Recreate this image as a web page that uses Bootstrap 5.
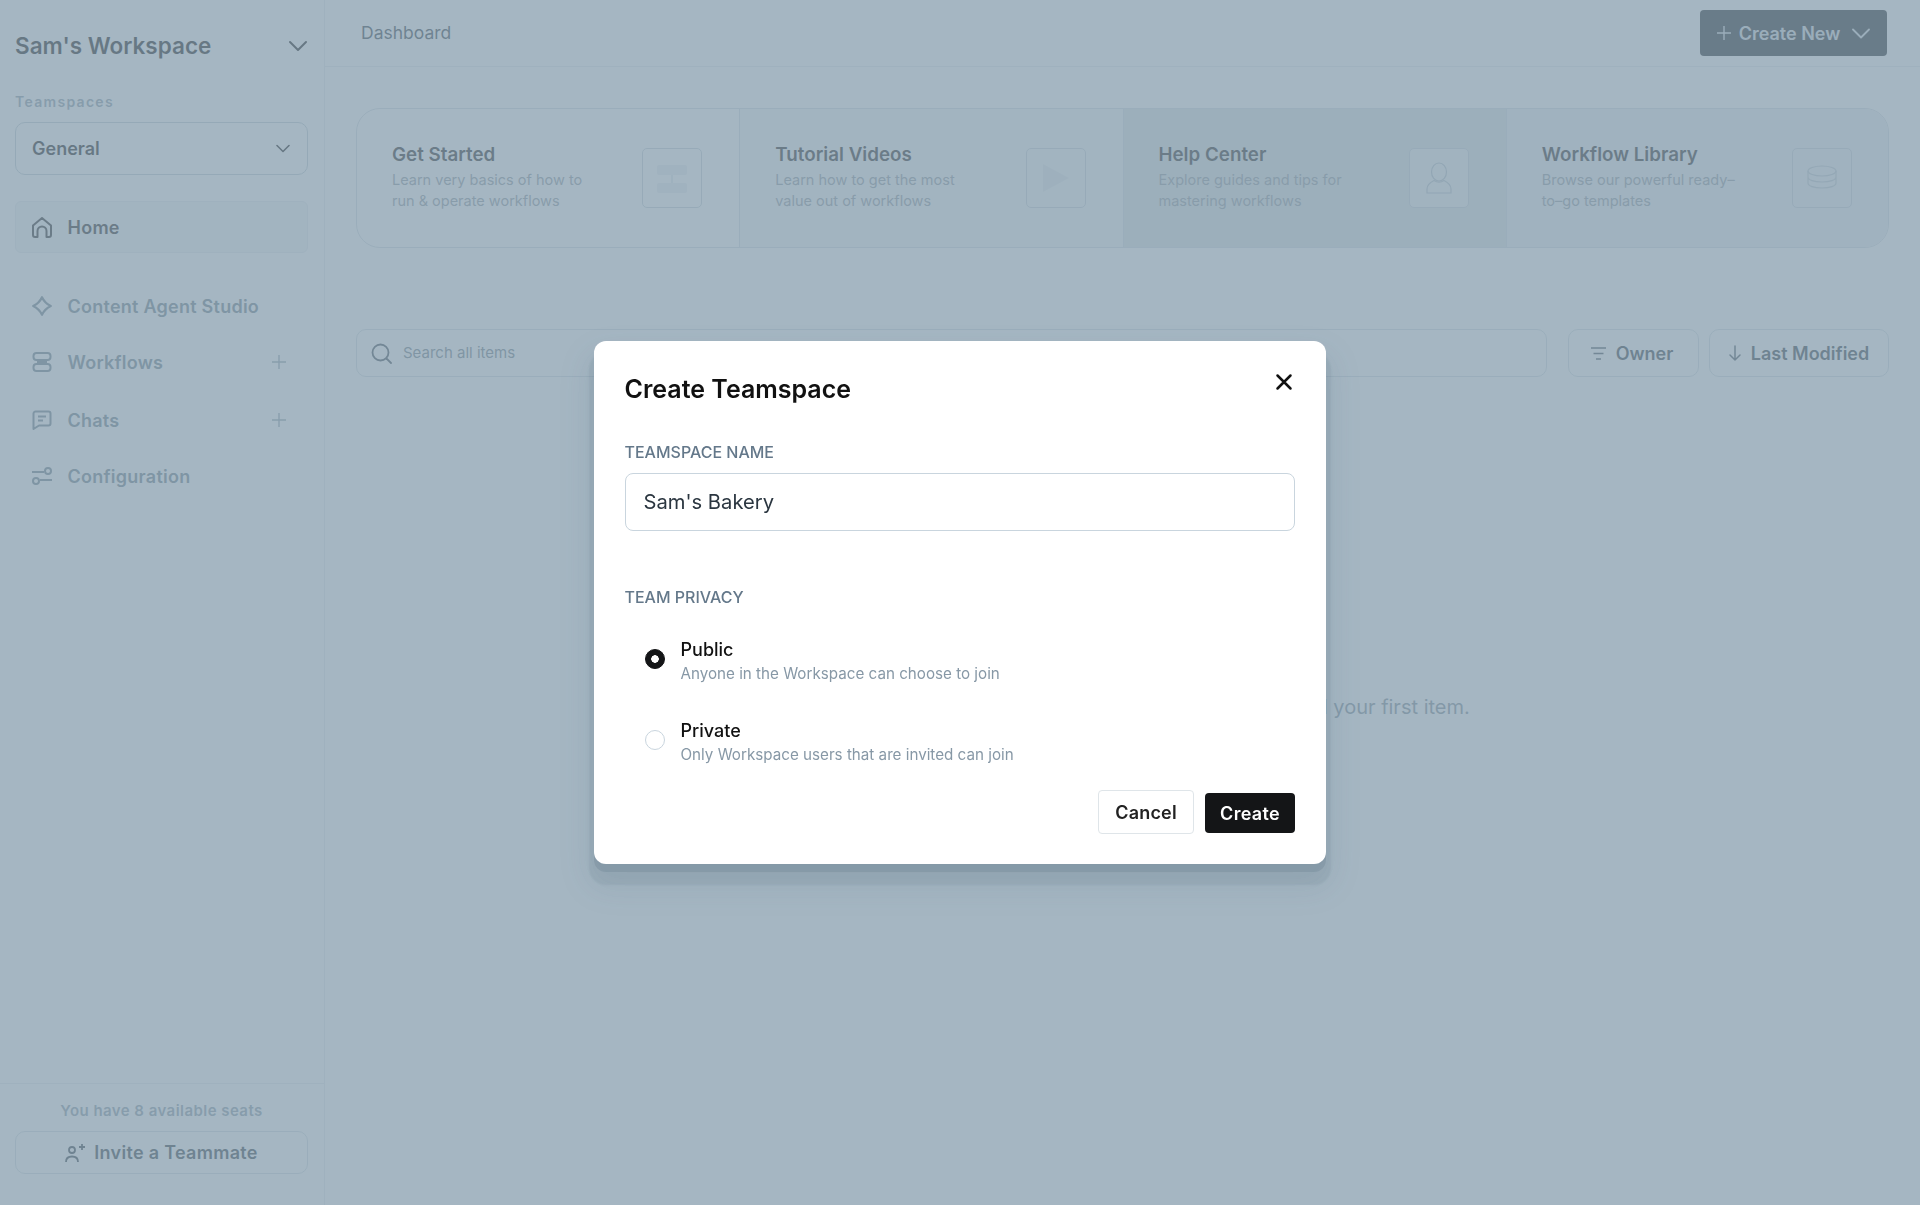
<!DOCTYPE html>
<html lang="en">
  <head>
    <meta charset="UTF-8" />
    <meta name="viewport" content="width=device-width, initial-scale=1" />
    <title>Create Teamspace</title>
    <link href="https://cdn.jsdelivr.net/npm/bootstrap@5.3.0/dist/css/bootstrap.min.css" rel="stylesheet" />
    <style>
      body {
        font-family: "Inter", "Liberation Sans", sans-serif;
        background: #fff;
        color: #111;
        height: 100vh;
        overflow: hidden;
      }
      svg { display: block; flex-shrink: 0; }

      /* sidebar */
      .side-col {
        width: 325px;
        flex-shrink: 0;
        border-right: 1px solid #e6ebee;
      }
      .side-top { padding: 0 16px 0 15px; }
      .ws-head { height: 92px; }
      .ws-title { font-size: 22.5px; font-weight: 600; }
      .team-label { font-size: 14px; font-weight: 600; letter-spacing: 1.3px; color: #8a9ca8; line-height: 20px; margin-bottom: 10px; }
      .team-select {
        height: 53px;
        border: 1px solid #c0ccd3;
        border-radius: 10px;
        padding: 0 17px 0 16px;
        font-size: 18px;
        font-weight: 600;
        margin-bottom: 26px;
      }
      .side-link {
        display: flex;
        align-items: center;
        gap: 15.5px;
        height: 54px;
        padding: 0 22px 0 17px;
        font-size: 18px;
        font-weight: 600;
        letter-spacing: .25px;
        color: #6b7f8b;
        text-decoration: none;
      }
      .side-plus { height: 58px; }
      .side-home {
        height: 52px;
        color: #222;
        background: #f3f5f6;
        border: 1px solid #e6ebee;
        border-radius: 6px;
        margin-bottom: 26px;
        padding-left: 16px;
      }
      .side-foot {
        margin-top: auto;
        border-top: 1px solid #e6ebee;
        padding: 17px 16px 31px 15px;
      }
      .seat-note { font-size: 15px; font-weight: 600; color: #8a9ca8; letter-spacing: .45px; line-height: 20px; margin-bottom: 10px; }
      .invite-btn {
        height: 43px;
        border: 1px solid #d5dde2;
        border-radius: 10px;
        font-size: 18px;
        font-weight: 600;
        letter-spacing: .3px;
        color: #2e3b44;
      }

      /* main */
      .top-strip { height: 67px; border-bottom: 1px solid #e6ebee; padding: 0 33px 0 36px; }
      .crumb { font-size: 17.5px; color: #2f3c45; }
      .create-new {
        height: 46px;
        width: 187px;
        margin-top: -1px;
        padding-top: 1px;
        background: #1a1f24;
        color: #d5dce1;
        border-radius: 4px;
        font-size: 18px;
        font-weight: 600;
      }
      .main-body { padding: 41px 31px 0 31px; }
      .tile-strip {
        height: 140px;
        border: 1px solid #d5dde2;
        border-radius: 24px;
        overflow: hidden;
      }
      .tile-item {
        flex: 1 1 0;
        padding: 0 37px 0 35px;
        border-right: 1px solid #d5dde2;
      }
      .tile-item:last-child { border-right: 0; padding-right: 36px; }
      .tile-b { background: #f4f6f6; }
      .tile-c { background: #dde3e3; }
      .tile-d { background: #eaedf1; border-color: transparent; }
      .tile-name { font-size: 18.8px; font-weight: 600; color: #222; line-height: 24px; margin-bottom: 3.5px; margin-top: -2px; }
      .tile-text { font-size: 14.5px; color: #8f9aa2; line-height: 20.5px; width: 205px; }
      .tile-icon {
        width: 60px;
        height: 60px;
        border: 1px solid #c8d2d9;
        border-radius: 5px;
        background: transparent;
        flex-shrink: 0;
      }
      .tile-c .tile-icon { background: #eef1f3; }
      .tool-row { margin-top: 81px; gap: 10px; }
      .search-field {
        height: 48px;
        width: 1191px;
        margin-right: 11px;
        border: 1px solid #d5dde2;
        border-radius: 10px;
        padding: 0 14px;
        font-size: 15px;
        color: #6f7f8a;
        gap: 11px;
      }
      .tool-btn {
        height: 48px;
        border: 1px solid #d5dde2;
        border-radius: 10px;
        font-size: 18px;
        font-weight: 600;
        color: #2e3b44;
        gap: 10px;
      }
      .tool-owner { width: 131px; padding-right: 3px; }
      .tool-sort { width: 180px; }
      .empty-note {
        font-size: 20px;
        color: #7d8d98;
        text-align: center;
        margin-top: 315px;
      }

      /* modal */
      .modal-backdrop.show {
        --bs-backdrop-bg: rgb(134, 157, 173);
        --bs-backdrop-opacity: .74;
      }
      .team-dialog { max-width: 732px; margin: 341px auto 0; }
      .team-sheet {
        height: 523px;
        border: 0;
        border-radius: 12px;
        padding: 0 31px 0 30.5px;
        box-shadow: 0 8px 0 0 rgba(60, 85, 105, .14), 0 16px 2px 5px rgba(60, 85, 105, .09), 0 18px 30px 8px rgba(60, 85, 105, .1);
      }
      .sheet-title { font-size: 25px; font-weight: 600; color: #111; line-height: 32px; padding-top: 32px; }
      .sheet-close { top: 32px; right: 33px; border: 0; background: none; padding: 0; line-height: 1; }
      .field-label { font-size: 16px; font-weight: 500; color: #64788a; line-height: 20px; margin-bottom: 0; }
      .label-name { margin-top: 36.5px; }
      .label-privacy { margin-top: 56.5px; }
      .name-input {
        height: 58px;
        border: 1px solid #c9d5de;
        border-radius: 8px;
        padding: 0 18px;
        font-size: 20.2px;
        color: #2b3640;
        margin-top: 11px;
      }
      .privacy-pick { gap: 16px; padding-left: 20px; margin: 0; }
      .pick-first { margin-top: 30.5px; }
      .pick-next { margin-top: 33px; }
      .form-check-input.privacy-radio {
        width: 20px;
        height: 20px;
        margin: 0 0 6px;
        border: 1px solid #c9d5de;
        flex-shrink: 0;
      }
      .form-check-input.privacy-radio:checked {
        background-color: #141517;
        border-color: #141517;
        background-image: radial-gradient(circle, #fff 3.5px, transparent 4px);
        background-size: auto;
      }
      .pick-name { font-size: 18px; font-weight: 500; color: #111; line-height: 24px; }
      .pick-note { font-size: 15.2px; color: #8798a6; line-height: 24px; }
      .sheet-actions { column-gap: 11px; margin-bottom: 30px; }
      .btn-cancel {
        width: 96px;
        height: 44px;
        border: 1px solid #dfe5e9;
        border-radius: 4px;
        background: #fff;
        font-size: 18px;
        font-weight: 600;
        letter-spacing: .2px;
        color: #222;
        padding: 0;
      }
      .btn-create {
        width: 90px;
        height: 40px;
        margin-bottom: 1px;
        border: 0;
        border-radius: 4px;
        background: #141517;
        font-size: 18px;
        font-weight: 600;
        letter-spacing: .3px;
        color: #fff;
        padding: 0;
      }
    </style>
  </head>
  <body>
    <div class="d-flex h-100">
      <aside class="side-col d-flex flex-column">
        <div class="side-top">
          <div class="ws-head d-flex align-items-center justify-content-between">
            <span class="ws-title">Sam's Workspace</span>
            <svg width="20" height="12" viewBox="0 0 20 12" fill="none" stroke="#111" stroke-width="2" stroke-linecap="round" stroke-linejoin="round"><path d="M2 2l8 8 8-8" /></svg>
          </div>
          <div class="team-label">Teamspaces</div>
          <div class="team-select d-flex align-items-center justify-content-between">
            <span>General</span>
            <svg width="14" height="9" viewBox="0 0 14 9" fill="none" stroke="#111" stroke-width="1.6" stroke-linecap="round" stroke-linejoin="round"><path d="M1 1.5l6 6 6-6" /></svg>
          </div>
          <a class="side-link side-home" href="#">
            <svg width="20" height="21" viewBox="0 0 20 21" fill="none" stroke="#222" stroke-width="2" stroke-linejoin="round"><path d="M1 8.5L10 1l9 7.5V18a2 2 0 0 1-2 2h-2.500V14a4.500 4.500 0 0 0-9 0v6H3a2 2 0 0 1-2-2z" /></svg>
            Home
          </a>
          <a class="side-link" href="#">
            <svg width="20" height="20" viewBox="0 0 20 20" fill="none" stroke="#6b7f8b" stroke-width="2.200" stroke-linejoin="round"><path d="M10 1.200Q12.800 7.200 18.800 10 12.800 12.800 10 18.800 7.200 12.800 1.200 10 7.200 7.200 10 1.200z" /></svg>
            Content Agent Studio
          </a>
          <a class="side-link side-plus" href="#">
            <svg width="20" height="20" viewBox="0 0 20 20" fill="none" stroke="#6b7f8b" stroke-width="2"><rect x="1.500" y="1" width="17" height="7" rx="3" /><rect x="1.500" y="12" width="17" height="7" rx="3" /><path d="M5 10h10" /></svg>
            <span class="flex-grow-1">Workflows</span>
            <svg width="14" height="14" viewBox="0 0 14 14" stroke="#8fa1ab" stroke-width="1.400"><path d="M7 0v14M0 7h14" /></svg>
          </a>
          <a class="side-link side-plus" href="#">
            <svg width="20" height="20" viewBox="0 0 20 20" fill="none" stroke="#6b7f8b" stroke-width="2" stroke-linejoin="round"><path d="M1.500 3.500a2 2 0 0 1 2-2h13a2 2 0 0 1 2 2v10a2 2 0 0 1-2 2H7l-5.500 3.500z" /><path d="M6 6.500h8M6 10.500h5" /></svg>
            <span class="flex-grow-1">Chats</span>
            <svg width="14" height="14" viewBox="0 0 14 14" stroke="#8fa1ab" stroke-width="1.400"><path d="M7 0v14M0 7h14" /></svg>
          </a>
          <a class="side-link" href="#">
            <svg width="20" height="20" viewBox="0 0 20 20" fill="none" stroke="#6b7f8b" stroke-width="2"><path d="M0 6h12M8 14h12" /><circle cx="16" cy="5" r="3" /><circle cx="4" cy="15" r="3" /></svg>
            Configuration
          </a>
        </div>
        <div class="side-foot">
          <div class="seat-note text-center">You have 8 available seats</div>
          <div class="invite-btn d-flex align-items-center justify-content-center gap-2">
            <svg width="21" height="20" viewBox="0 0 21 20" fill="none" stroke="#2e3b44" stroke-width="1.800"><circle cx="7" cy="7" r="3" /><path d="M1 19c0-3.500 2.500-5.500 6-5.500s6 2 6 5.500" /><path d="M17 1v6M14 4h6" /></svg>
            Invite a Teammate
          </div>
        </div>
      </aside>

      <main class="flex-grow-1 d-flex flex-column">
        <header class="top-strip d-flex align-items-center justify-content-between">
          <span class="crumb">Dashboard</span>
          <div class="create-new d-flex align-items-center justify-content-center gap-2">
            <svg width="14" height="14" viewBox="0 0 14 14" stroke="#d5dce1" stroke-width="1.400"><path d="M7 0v14M0 7h14" /></svg>
            Create New
            <svg width="18" height="11" viewBox="0 0 18 11" fill="none" stroke="#d5dce1" stroke-width="1.800" stroke-linecap="round" stroke-linejoin="round" class="ms-1"><path d="M1 1.500l8 8 8-8" /></svg>
          </div>
        </header>
        <div class="main-body">
          <div class="tile-strip d-flex">
            <div class="tile-item d-flex align-items-center justify-content-between">
              <div>
                <div class="tile-name">Get Started</div>
                <div class="tile-text">Learn very basics of how to run &amp; operate workflows</div>
              </div>
              <div class="tile-icon">
                <svg width="58" height="58" viewBox="0 0 58 58"><rect x="14" y="16" width="30" height="10" rx="2" fill="#eaeef1" /><rect x="14" y="34" width="30" height="10" rx="2" fill="#eaeef1" /><path d="M29 26v8" stroke="#dde3e7" stroke-width="1.500" /></svg>
              </div>
            </div>
            <div class="tile-item tile-b d-flex align-items-center justify-content-between">
              <div>
                <div class="tile-name">Tutorial Videos</div>
                <div class="tile-text">Learn how to get the most value out of workflows</div>
              </div>
              <div class="tile-icon">
                <svg width="58" height="58" viewBox="0 0 58 58"><path d="M16 15l26 14-26 14z" fill="#e4e9ec" /></svg>
              </div>
            </div>
            <div class="tile-item tile-c d-flex align-items-center justify-content-between">
              <div>
                <div class="tile-name">Help Center</div>
                <div class="tile-text">Explore guides and tips for mastering workflows</div>
              </div>
              <div class="tile-icon">
                <svg width="58" height="58" viewBox="0 0 58 58" fill="none" stroke="#b5c1c9" stroke-width="1.200"><ellipse cx="29" cy="23" rx="7.500" ry="9" /><path d="M17 44v-4c0-4.500 4-7 7-8.500 3 2 7 2 10 0 3 1.500 7 4 7 8.500v4z" /></svg>
              </div>
            </div>
            <div class="tile-item tile-d d-flex align-items-center justify-content-between">
              <div>
                <div class="tile-name">Workflow Library</div>
                <div class="tile-text">Browse our powerful ready–to–go templates</div>
              </div>
              <div class="tile-icon">
                <svg width="58" height="58" viewBox="0 0 58 58" fill="none" stroke="#bcc7cf" stroke-width="1.200"><ellipse cx="29" cy="22" rx="14" ry="5" /><path d="M15 22v6c0 3 6 5 14 5s14-2 14-5v-6M15 28v6c0 3 6 5 14 5s14-2 14-5v-6" /></svg>
              </div>
            </div>
          </div>
          <div class="tool-row d-flex">
            <div class="search-field d-flex align-items-center">
              <svg width="21" height="21" viewBox="0 0 21 21" fill="none" stroke="#3f4c55" stroke-width="1.800" stroke-linecap="round"><circle cx="9.500" cy="9.500" r="8" /><path d="M15.500 15.500L20 20" /></svg>
              Search all items
            </div>
            <div class="tool-btn tool-owner d-flex align-items-center justify-content-center">
              <svg width="15" height="13" viewBox="0 0 15 13" stroke="#3f4c55" stroke-width="1.500"><path d="M0 1h15M2.500 6.500h10M5 12h5" /></svg>
              Owner
            </div>
            <div class="tool-btn tool-sort d-flex align-items-center justify-content-center">
              <svg width="12" height="16" viewBox="0 0 12 16" fill="none" stroke="#3f4c55" stroke-width="1.500" stroke-linecap="round" stroke-linejoin="round"><path d="M6 1v14M1 10l5 5 5-5" /></svg>
              Last Modified
            </div>
          </div>
          <div class="empty-note">Nothing here yet. Use the Create New button above to add your first item.</div>
        </div>
      </main>
    </div>

    <div class="modal-backdrop show"></div>
    <div class="modal d-block" tabindex="-1" role="dialog">
      <div class="modal-dialog team-dialog">
        <div class="modal-content team-sheet">
          <div class="sheet-title">Create Teamspace</div>
          <button type="button" class="sheet-close position-absolute" aria-label="Close">
            <svg width="18" height="18" viewBox="0 0 18 18" stroke="#111" stroke-width="2.500" stroke-linecap="round"><path d="M2.500 2.500l13 13M15.500 2.500l-13 13" /></svg>
          </button>
          <label class="field-label label-name d-block" for="teamName">TEAMSPACE NAME</label>
          <input class="form-control name-input" id="teamName" type="text" value="Sam's Bakery" />
          <div class="field-label label-privacy">TEAM PRIVACY</div>
          <label class="privacy-pick pick-first form-check d-flex align-items-center">
            <input class="form-check-input privacy-radio" type="radio" name="privacy" checked />
            <span>
              <span class="pick-name d-block">Public</span>
              <span class="pick-note d-block">Anyone in the Workspace can choose to join</span>
            </span>
          </label>
          <label class="privacy-pick pick-next form-check d-flex align-items-center">
            <input class="form-check-input privacy-radio" type="radio" name="privacy" />
            <span>
              <span class="pick-name d-block">Private</span>
              <span class="pick-note d-block">Only Workspace users that are invited can join</span>
            </span>
          </label>
          <div class="sheet-actions d-flex justify-content-end align-items-end mt-auto">
            <button type="button" class="btn btn-cancel">Cancel</button>
            <button type="button" class="btn btn-create">Create</button>
          </div>
        </div>
      </div>
    </div>

    <script src="https://cdn.jsdelivr.net/npm/bootstrap@5.3.0/dist/js/bootstrap.bundle.min.js"></script>
  </body>
</html>
